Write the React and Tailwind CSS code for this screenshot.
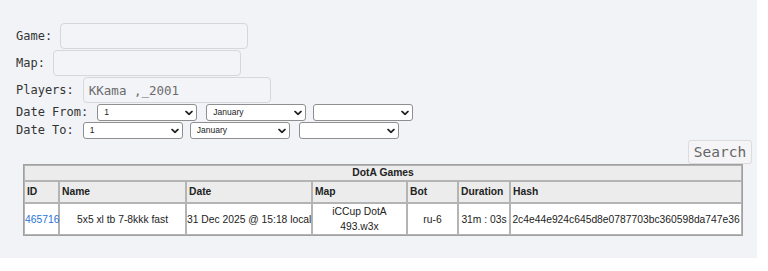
import React from 'react'

const mono = { fontFamily: '"DejaVu Sans Mono", "Liberation Mono", monospace' }
const sans = { fontFamily: '"Liberation Sans", Arial, sans-serif' }

function Chevron() {
    return (
        <svg className="pointer-events-none absolute right-[4px] top-1/2 -translate-y-1/2" width="8" height="5" viewBox="0 0 8 5">
            <polyline points="1,0.8 4,3.8 7,0.8" fill="none" stroke="#222" strokeWidth="1.7" strokeLinecap="round" strokeLinejoin="round" />
        </svg>
    )
}

function DateSelect({ value, className }) {
    return (
        <div className={'relative h-[17px] w-[100px] ' + (className || '')}>
            <select
                defaultValue={value}
                style={sans}
                className="block h-full w-full appearance-none rounded-[3px] border border-[#8f8f8f] bg-white pl-[6px] text-[8.5px] leading-none text-[#222] outline-none"
            >
                <option value={value}>{value}</option>
            </select>
            <Chevron />
        </div>
    )
}

function Field({ label, gap, value }) {
    return (
        <div className={'flex h-[26px] items-center ' + gap}>
            <label style={mono} className="text-[12px] text-[#333] whitespace-pre">{label}</label>
            <input
                defaultValue={value}
                style={mono}
                className="block h-[26px] w-[188px] rounded-[4px] border border-[#d6d7db] bg-[#f3f4f8] px-[5px] text-[12.5px] text-[#6b6b6b] outline-none"
            />
        </div>
    )
}

export default function App() {
    return (
        <div className="h-[258px] w-[757px] bg-[#f2f3f7] pt-[23px]">
            <div className="flex flex-col gap-px pl-[16px]">
                <Field label="Game:" gap="gap-[8px]" />
                <Field label="Map:" gap="gap-[8px]" />
                <Field label="Players:" gap="gap-[9px]" value="KKama ,_2001" />
                <div className="flex h-[17px] items-center">
                    <span style={mono} className="mr-[9px] text-[12px] leading-[17px] text-[#333] whitespace-pre">Date From:</span>
                    <DateSelect value="1" />
                    <DateSelect value="January" className="ml-[9px]" />
                    <DateSelect value="" className="ml-[7px]" />
                </div>
                <div className="flex h-[17px] items-center">
                    <span style={mono} className="mr-[9px] text-[12px] leading-[17px] text-[#333] whitespace-pre">Date To:</span>
                    <DateSelect value="1" />
                    <DateSelect value="January" className="ml-[7px]" />
                    <DateSelect value="" className="ml-[9px]" />
                </div>
            </div>
            <div className="mt-px flex justify-end pr-[5px]">
                <button style={mono} className="h-[24px] w-[64px] rounded-[3px] border border-[#dcdcde] bg-[#f5f5f8] text-[14.5px] leading-none text-[#666]">
                    Search
                </button>
            </div>
            <table style={sans} className="ml-[23px] w-[720px] table-fixed border-separate border-spacing-0 border border-[#a0a0a0] text-[10.3px] text-[#222]">
                <colgroup>
                    <col className="w-[35px]" />
                    <col className="w-[127px]" />
                    <col className="w-[126px]" />
                    <col className="w-[95px]" />
                    <col className="w-[51px]" />
                    <col className="w-[52px]" />
                    <col className="w-[232px]" />
                </colgroup>
                <thead>
                    <tr>
                        <th colSpan={7} className="border border-[#b4b4b4] bg-[#ececec] py-0 text-center font-bold leading-[14px]">DotA Games</th>
                    </tr>
                    <tr className="bg-[#ececec]">
                        <th className="border border-[#b4b4b4] px-[2px] py-[3px] text-left font-bold leading-[14px]">ID</th>
                        <th className="border border-[#b4b4b4] px-[2px] py-[3px] text-left font-bold leading-[14px]">Name</th>
                        <th className="border border-[#b4b4b4] px-[2px] py-[3px] text-left font-bold leading-[14px]">Date</th>
                        <th className="border border-[#b4b4b4] px-[2px] py-[3px] text-left font-bold leading-[14px]">Map</th>
                        <th className="border border-[#b4b4b4] px-[2px] py-[3px] text-left font-bold leading-[14px]">Bot</th>
                        <th className="border border-[#b4b4b4] px-[2px] py-[3px] text-left font-bold leading-[14px]">Duration</th>
                        <th className="border border-[#b4b4b4] px-[2px] py-[3px] text-left font-bold leading-[14px]">Hash</th>
                    </tr>
                </thead>
                <tbody>
                    <tr className="bg-white">
                        <td className="border border-[#b4b4b4] p-0 text-left leading-[15px] whitespace-nowrap">
                            <a href="#" className="text-[#1f74d8]">465716</a>
                        </td>
                        <td className="border border-[#b4b4b4] px-px text-center leading-[15px]">5x5 xl tb 7-8kkk fast</td>
                        <td className="border border-[#b4b4b4] p-0 text-center leading-[15px] whitespace-nowrap">31 Dec 2025 @ 15:18 local</td>
                        <td className="border border-[#b4b4b4] px-px py-0 text-center leading-[15px]">iCCup DotA 493.w3x</td>
                        <td className="border border-[#b4b4b4] px-px text-center leading-[15px]">ru-6</td>
                        <td className="border border-[#b4b4b4] p-0 text-center leading-[15px] whitespace-nowrap">31m : 03s</td>
                        <td className="border border-[#b4b4b4] p-0 text-center leading-[15px] whitespace-nowrap">2c4e44e924c645d8e0787703bc360598da747e36</td>
                    </tr>
                </tbody>
            </table>
        </div>
    )
}
